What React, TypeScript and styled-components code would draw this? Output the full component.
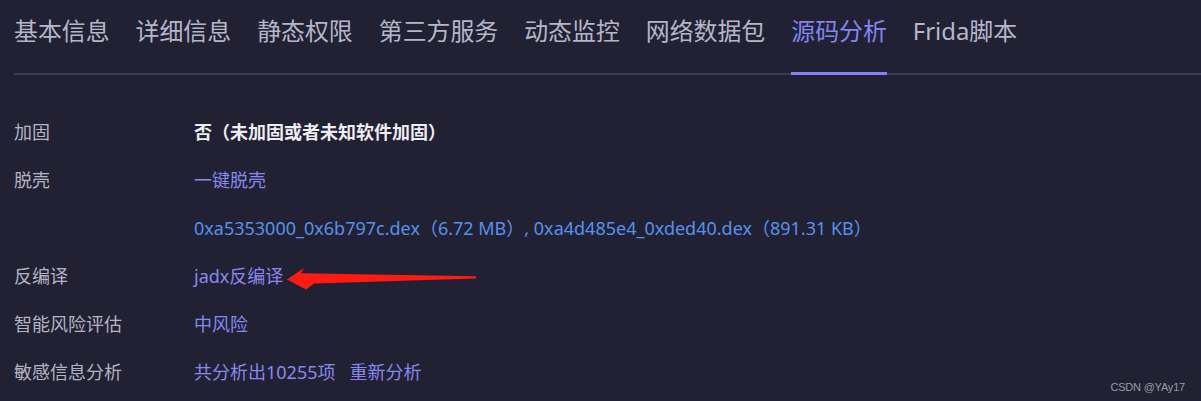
import styled, { createGlobalStyle } from 'styled-components'

const GlobalStyle = createGlobalStyle`
  html, body {
    margin: 0;
    padding: 0;
    background: #212133;
  }
  body {
    font-family: "Noto Sans", "Noto Sans CJK SC", sans-serif;
  }
`

const TABS = ['基本信息', '详细信息', '静态权限', '第三方服务', '动态监控', '网络数据包', '源码分析', 'Frida脚本']

type Tone = 'plain' | 'strong' | 'link' | 'file'

interface InfoRow {
  label: string
  values: { text: string; tone: Tone }[]
}

const ROWS: InfoRow[] = [
  { label: '加固', values: [{ text: '否（未加固或者未知软件加固）', tone: 'strong' }] },
  { label: '脱壳', values: [{ text: '一键脱壳', tone: 'link' }] },
  {
    label: '',
    values: [{ text: '0xa5353000_0x6b797c.dex（6.72 MB）, 0xa4d485e4_0xded40.dex（891.31 KB）', tone: 'file' }]
  },
  { label: '反编译', values: [{ text: 'jadx反编译', tone: 'link' }] },
  { label: '智能风险评估', values: [{ text: '中风险', tone: 'link' }] },
  {
    label: '敏感信息分析',
    values: [
      { text: '共分析出10255项', tone: 'link' },
      { text: '重新分析', tone: 'link' }
    ]
  }
]

export default function App() {
  return (
    <>
      <GlobalStyle />
      <Page>
        <TabBar>
          {TABS.map(tab => (
            <Tab key={tab} $active={tab === '源码分析'}>
              {tab}
            </Tab>
          ))}
        </TabBar>
        <InfoList>
          {ROWS.map((row, i) => (
            <Row key={i}>
              <Label>{row.label}</Label>
              <Values>
                {row.values.map(v => (
                  <Value key={v.text} $tone={v.tone}>
                    {v.text}
                  </Value>
                ))}
              </Values>
            </Row>
          ))}
        </InfoList>

        {/* red hand-drawn pointer next to "jadx反编译" */}
        <Arrow width="192" height="26" viewBox="0 0 192 26">
          <path
            d="M1 13.5 L18 2 L15 7.2 L190 10.3 L190 12.6 L28 17.4 L20 23.5 Z"
            fill="#ff1b12"
          />
        </Arrow>
        <Watermark>CSDN @YAy17</Watermark>
      </Page>
    </>
  )
}

const Page = styled.div`
  position: relative;
  width: 1201px;
  height: 401px;
  overflow: hidden;
  background: #212133;
  padding-top: 15px;
  box-sizing: border-box;
`

const TabBar = styled.div`
  display: flex;
  gap: 26px;
  margin-left: 14px;
  border-bottom: 2px solid #3b3b4d;
`

const Tab = styled.div<{ $active: boolean }>`
  font-size: 23.9px;
  line-height: 32px;
  padding-bottom: 25px;
  margin-bottom: -2px;
  white-space: nowrap;
  color: ${p => (p.$active ? '#8484f2' : '#b6b6ca')};
  border-bottom: 3px solid ${p => (p.$active ? '#8282f0' : 'transparent')};
`

const InfoList = styled.div`
  display: flex;
  flex-direction: column;
  margin-top: 32px;
  padding-left: 14px;
`

const Row = styled.div`
  display: grid;
  grid-template-columns: 180px 1fr;
  height: 48px;
  align-items: center;
  font-size: 18px;
`

const Label = styled.div`
  color: #b4b4c4;
`

const Values = styled.div`
  display: flex;
  gap: 14px;
  white-space: nowrap;
`

const TONE_COLORS: Record<Tone, string> = {
  plain: '#b4b4c4',
  strong: '#ededf3',
  link: '#8888ee',
  file: '#5592ec'
}

const Value = styled.span<{ $tone: Tone }>`
  color: ${p => TONE_COLORS[p.$tone]};
  font-weight: ${p => (p.$tone === 'strong' ? 700 : 400)};
`

const Arrow = styled.svg`
  position: absolute;
  left: 286px;
  top: 266px;
`

const Watermark = styled.div`
  position: absolute;
  right: 16px;
  bottom: 8px;
  font-family: "Liberation Sans", sans-serif;
  font-size: 11px;
  letter-spacing: -0.2px;
  color: #9a9aa4;
`
